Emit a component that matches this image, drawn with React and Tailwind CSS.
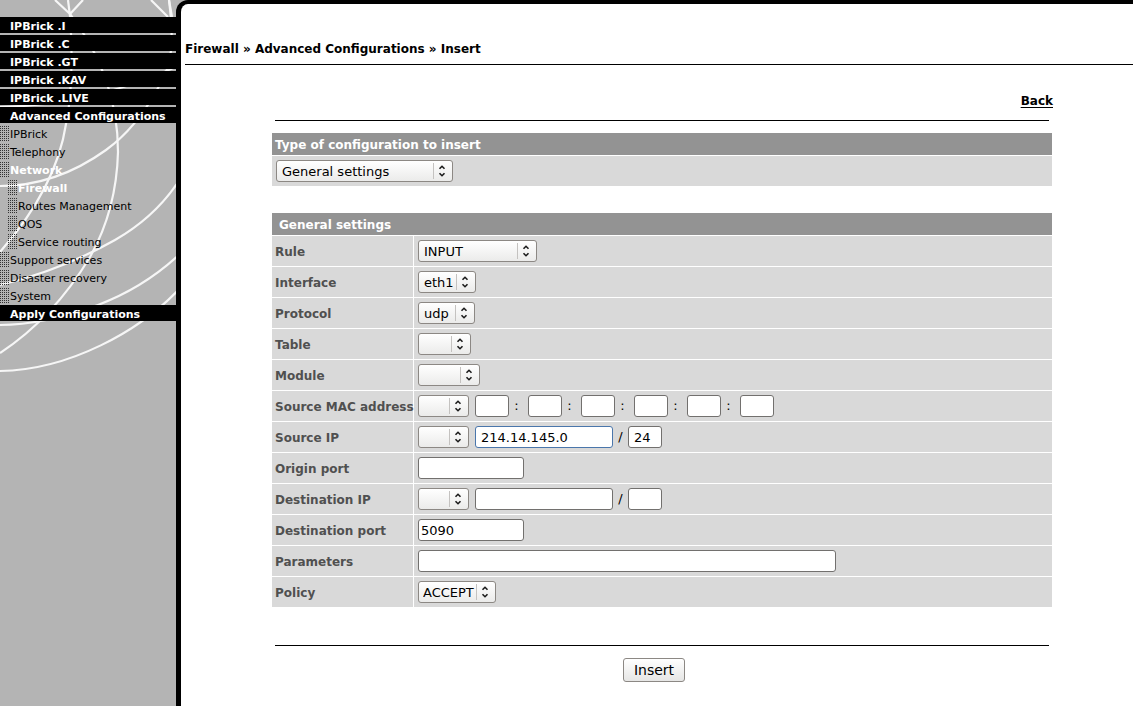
/**
 * Firewall rule form
 * Sidebar navigation and the "insert rule" settings table
 */

const topMenu = ['IPBrick .I', 'IPBrick .C', 'IPBrick .GT', 'IPBrick .KAV', 'IPBrick .LIVE', 'Advanced Configurations']

const subMenu = [
  { label: 'IPBrick' },
  { label: 'Telephony' },
  { label: 'Network', active: true },
  { label: 'Firewall', active: true, nested: true },
  { label: 'Routes Management', nested: true },
  { label: 'QOS', nested: true },
  { label: 'Service routing', nested: true },
  { label: 'Support services' },
  { label: 'Disaster recovery' },
  { label: 'System' },
]

const SidebarLines = () => (
  <svg
    className="absolute top-0 left-0"
    width="184"
    height="400"
    viewBox="0 0 184 400"
    fill="none"
    stroke="#f6f6f6"
    strokeWidth="2.2"
    aria-hidden="true"
  >
    <path d="M55 0L70 14M68 0L70 16M83 0L70 14M151 0L168 17M169 0L172 17" />
    <path d="M70 14C73 60 72 95 66 124C59 170 35 212 0 252" />
    <path d="M70 14C105 60 118 105 118 152C117 190 108 225 90 257C66 297 38 328 0 353" />
    <path d="M169 0C174 40 173 65 158 88C145 112 128 134 106 150C74 173 38 186 0 186" />
    <path d="M0 107C55 106 120 94 182 64" />
    <path d="M182 176C166 202 143 224 115 240C83 258 42 275 0 285" />
    <path d="M182 252C155 278 127 294 98 305C65 317 33 325 0 325" />
    <path d="M182 286C140 332 68 370 0 371" />
  </svg>
)

const MenuHeading = ({ children }) => (
  <a href="#" className="block h-4 bg-black pl-[10px] text-[11px] leading-5 font-bold whitespace-nowrap text-white">
    {children}
  </a>
)

const Sidebar = () => (
  <nav className="relative w-[176px] shrink-0 overflow-hidden pt-[17px]">
    <SidebarLines />
    <div className="relative">
      <div className="flex flex-col gap-[2px]">
        {topMenu.map((label) => (
          <MenuHeading key={label}>{label}</MenuHeading>
        ))}
      </div>
      <ul className="pt-[2px]">
        {subMenu.map(({ label, active, nested }) => (
          <li key={label} className={nested ? 'flex h-[18px] pl-2' : 'flex h-[18px]'}>
            <span className="mt-px mr-px h-[15px] w-[9px] bg-[conic-gradient(from_270deg,#333_25%,transparent_0)] bg-[length:2px_2px]" />
            <a
              href="#"
              className={
                active
                  ? 'text-[11px] leading-5 font-bold text-white'
                  : 'text-[11px] leading-5 text-black'
              }
            >
              {label}
            </a>
          </li>
        ))}
      </ul>
      <MenuHeading>Apply Configurations</MenuHeading>
    </div>
  </nav>
)

const Select = ({ value, label, id, width, tight }) => (
  <span className={`relative inline-flex shrink-0 ${width}`}>
    <select
      id={id}
      aria-label={label}
      defaultValue={value}
      className={`h-[22px] w-full appearance-none rounded-[3px] border border-[#8c8884] bg-linear-to-b from-white to-[#ebebea] pt-px pr-5 text-[13px] leading-5 text-black ${tight ? 'pl-1' : 'pl-[5px]'}`}
    >
      <option>{value}</option>
    </select>
    <svg
      className="pointer-events-none absolute top-0 right-0"
      width="21"
      height="22"
      viewBox="0 0 21 22"
      fill="none"
      aria-hidden="true"
    >
      <path d="M1.5 3V19" stroke="#c4c2c0" />
      <path d="M7.5 8.8L10 6.3L12.5 8.8M7.5 13.2L10 15.7L12.5 13.2" stroke="#1c1c1c" strokeWidth="1.6" />
    </svg>
  </span>
)

const TextBox = ({ value = '', label, id, width, focused, flush }) => (
  <input
    type="text"
    id={id}
    aria-label={label}
    defaultValue={value}
    className={`h-[22px] shrink-0 rounded-[3px] border bg-white text-[13px] leading-5 text-black ${width} ${focused ? 'border-[#4a76ab]' : 'border-[#72706e]'} ${flush ? 'px-[2px]' : 'px-[5px]'}`}
  />
)

const Separator = ({ children, width }) => (
  <span className={`text-center text-[13px] leading-6 text-black ${width}`}>{children}</span>
)

const Row = ({ label, htmlFor, children }) => (
  <tr className="bg-[#d9d9d9]">
    <th scope="row" className="h-[30px] p-0 pt-0.5 pl-[3px] text-left text-[12px] leading-4 font-bold whitespace-nowrap text-[#505050]">
      <label htmlFor={htmlFor}>{label}</label>
    </th>
    <td className="h-[30px] p-0 pl-1">
      <div className="flex items-center">{children}</div>
    </td>
  </tr>
)

const AddressRow = ({ label, id, address, mask, focused }) => (
  <Row label={label} htmlFor={id}>
    <Select width="w-[51px]" value="" label={`${label} match`} />
    <span className="w-[6px]" />
    <TextBox id={id} width="w-[138px]" value={address} focused={focused} />
    <Separator width="w-[15px]">/</Separator>
    <TextBox width="w-[34px]" value={mask} label={`${label} mask`} />
  </Row>
)

const macParts = [1, 2, 3, 4, 5, 6]

const RuleForm = () => (
  <form className="pr-[80px] pl-[90px]">
    <div className="flex justify-end pt-7">
      <a href="#" className="text-[12px] leading-4 font-bold text-black underline underline-offset-2">
        Back
      </a>
    </div>
    <hr className="mx-1 mt-[11px] border-black" />

    <table className="mt-[11px] w-full border-separate border-spacing-px">
      <thead>
        <tr>
          <th className="h-[22px] bg-[#939393] p-0 pt-0.5 pl-[3px] text-left text-[12px] leading-4 font-bold text-white">
            <label htmlFor="config-type">Type of configuration to insert</label>
          </th>
        </tr>
      </thead>
      <tbody>
        <tr>
          <td className="h-[30px] bg-[#d9d9d9] p-0 pl-1">
            <div className="flex">
              <Select id="config-type" width="w-[177px]" value="General settings" />
            </div>
          </td>
        </tr>
      </tbody>
    </table>

    <table className="mt-[25px] w-full table-fixed border-separate border-spacing-px">
      <colgroup>
        <col className="w-[141px]" />
        <col />
      </colgroup>
      <thead>
        <tr>
          <th colSpan={2} className="h-[22px] bg-[#939393] p-0 pt-0.5 pl-[7px] text-left text-[12px] leading-4 font-bold text-white">
            General settings
          </th>
        </tr>
      </thead>
      <tbody>
        <Row label="Rule" htmlFor="rule">
          <Select id="rule" width="w-[119px]" value="INPUT" />
        </Row>
        <Row label="Interface" htmlFor="interface">
          <Select id="interface" width="w-[58px]" value="eth1" />
        </Row>
        <Row label="Protocol" htmlFor="protocol">
          <Select id="protocol" width="w-[57px]" value="udp" />
        </Row>
        <Row label="Table" htmlFor="table">
          <Select id="table" width="w-[53px]" value="" />
        </Row>
        <Row label="Module" htmlFor="module">
          <Select id="module" width="w-[62px]" value="" />
        </Row>
        <Row label="Source MAC address" htmlFor="mac">
          <Select id="mac" width="w-[51px]" value="" />
          <span className="w-[6px]" />
          {macParts.map((part) => (
            <span key={part} className="flex items-center">
              {part > 1 && <Separator width="w-[19px] pr-1">:</Separator>}
              <TextBox width="w-[34px]" label={`MAC part ${part}`} />
            </span>
          ))}
        </Row>
        <AddressRow label="Source IP" id="source-ip" address="214.14.145.0" mask="24" focused />
        <Row label="Origin port" htmlFor="origin-port">
          <TextBox id="origin-port" width="w-[106px]" flush />
        </Row>
        <AddressRow label="Destination IP" id="destination-ip" />
        <Row label="Destination port" htmlFor="destination-port">
          <TextBox id="destination-port" width="w-[106px]" value="5090" flush />
        </Row>
        <Row label="Parameters" htmlFor="parameters">
          <TextBox id="parameters" width="w-[418px]" flush />
        </Row>
        <Row label="Policy" htmlFor="policy">
          <Select id="policy" width="w-[78px]" value="ACCEPT" tight />
        </Row>
      </tbody>
    </table>

    <hr className="mx-1 mt-[37px] border-black" />
    <div className="flex justify-center pt-3 pr-4">
      <button
        type="button"
        className="h-6 w-[62px] rounded-[3px] border border-[#8c8884] bg-linear-to-b from-white to-[#e6e6e5] text-[14px] leading-5 text-black"
      >
        Insert
      </button>
    </div>
  </form>
)

const App = () => {
  return (
    <div className="flex min-h-screen overflow-hidden bg-[#b4b4b4] font-['DejaVu_Sans',Verdana,sans-serif]">
      <Sidebar />
      <main className="grow rounded-tl-[12px] border-t-4 border-l-5 border-black bg-white">
        <h1 className="ml-1 border-b border-black pt-[37px] pb-[7px] text-[12px] leading-4 font-bold text-black">
          Firewall » Advanced Configurations » Insert
        </h1>
        <RuleForm />
      </main>
    </div>
  )
}

export default App
